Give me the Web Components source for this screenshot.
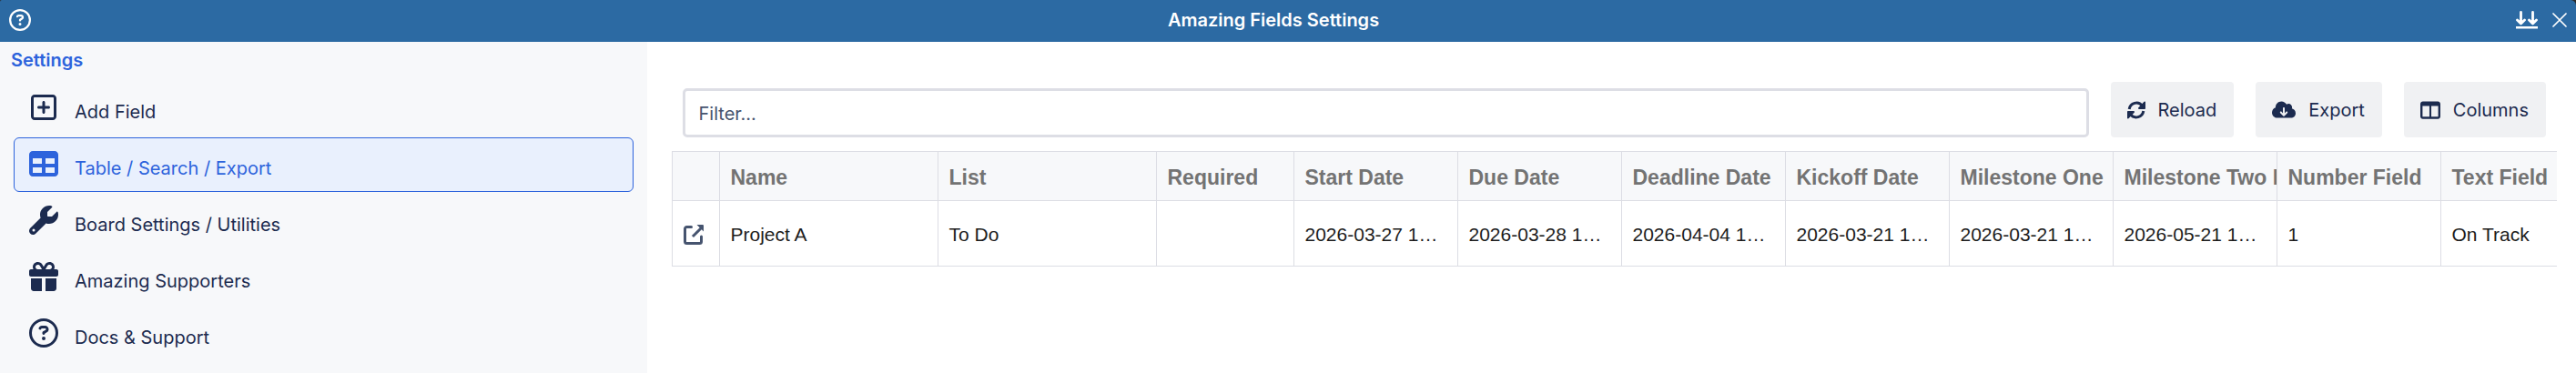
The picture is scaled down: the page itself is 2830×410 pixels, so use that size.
<!DOCTYPE html>
<html lang="en">
<head>
<meta charset="utf-8">
<title>Amazing Fields Settings</title>
<style>
html, body { margin: 0; height: 100%; }
body { background: #2b2b2b; font-family: Inter, "Liberation Sans", sans-serif; font-size: 20px; line-height: 24px; color: #1c2b4f; }
</style>
</head>
<body>
<settings-app></settings-app>
<script>
const ICONS = {
  help: ['0 0 512 512', '<path d="M464 256a208 208 0 1 0-416 0 208 208 0 1 0 416 0zM0 256a256 256 0 1 1 512 0 256 256 0 1 1-512 0zm169.800-90.700c7.900-22.300 29.100-37.300 52.800-37.300h58.300c34.900 0 63.100 28.300 63.100 63.100 0 22.600-12.100 43.500-31.700 54.800L280 264.400c-.2 13-10.900 23.600-24 23.600-13.300 0-24-10.700-24-24v-13.500c0-8.600 4.600-16.500 12.100-20.800l44.300-25.400c4.700-2.700 7.600-7.700 7.600-13.100 0-8.400-6.800-15.100-15.100-15.100h-58.300c-3.400 0-6.400 2.100-7.500 5.300l-.4 1.200c-4.400 12.500-18.200 19-30.600 14.600s-19-18.200-14.600-30.600l.3-1.300zM224 352a32 32 0 1 1 64 0 32 32 0 1 1-64 0z"/>'],
  add: ['0 0 448 448', '<path d="M64 48c-9 0-16 7-16 16v320c0 9 7 16 16 16h320c9 0 16-7 16-16V64c0-9-7-16-16-16zM0 64C0 29 29 0 64 0h320c35 0 64 29 64 64v320c0 35-29 64-64 64H64c-35 0-64-29-64-64zm200 248v-64h-64c-13 0-24-11-24-24s11-24 24-24h64v-64c0-13 11-24 24-24s24 11 24 24v64h64c13 0 24 11 24 24s-11 24-24 24h-64v64c0 13-11 24-24 24s-24-11-24-24z"/>'],
  table: ['0 0 512 448', '<path fill-rule="evenodd" d="M64 0h384c35 0 64 29 64 64v320c0 35-29 64-64 64H64c-35 0-64-29-64-64V64C0 29 29 0 64 0zM64 128v96h160v-96zm224 0v96h160v-96zM64 288v96h160v-96zm224 0v96h160v-96z"/>'],
  wrench: ['0 0 512 512', '<path d="M352 320c88.400 0 160-71.600 160-160 0-15.300-2.200-30.100-6.200-44.200-3.100-10.800-16.400-13.200-24.300-5.300l-76.800 76.800c-3 3-7.100 4.700-11.300 4.700H336c-8.800 0-16-7.200-16-16v-57.400c0-4.200 1.700-8.300 4.700-11.300l76.800-76.800c7.900-7.900 5.400-21.200-5.300-24.300C382.100 2.200 367.300 0 352 0c-88.400 0-160 71.600-160 160 0 19.100 3.400 37.500 9.500 54.500L19.900 396.100C7.200 408.800 0 426.100 0 444.100 0 481.600 30.400 512 67.900 512c18 0 35.300-7.200 48-19.900l181.600-181.600c17 6.200 35.400 9.500 54.500 9.500zM80 408a24 24 0 1 1 0 48 24 24 0 1 1 0-48z"/>'],
  gift: ['0 0 512 512', '<path d="M190.500 68.800 225.300 128H152c-22.100 0-40-17.900-40-40s17.900-40 40-40h2.200c14.900 0 28.800 7.900 36.300 20.800zM64 88c0 14.400 3.500 28 9.600 40H32c-17.700 0-32 14.300-32 32v64c0 17.700 14.300 32 32 32h448c17.700 0 32-14.300 32-32v-64c0-17.700-14.300-32-32-32h-41.600c6.100-12 9.600-25.600 9.600-40 0-48.600-39.400-88-88-88h-2.200c-31.900 0-61.500 16.900-77.700 44.400L256 85.500l-24.100-41C215.700 16.900 186.100 0 154.200 0H152C103.400 0 64 39.400 64 88zm336 0c0 22.100-17.900 40-40 40h-73.300l34.800-59.200C329.100 55.900 342.900 48 357.800 48h2.200c22.100 0 40 17.900 40 40zM32 288v176c0 26.500 21.500 48 48 48h144V288zm256 224h144c26.500 0 48-21.500 48-48V288H288z"/>'],
  reload: ['0 0 20 20', '<path fill="none" stroke="currentColor" stroke-width="3" d="M2.200 9A8 8 0 0 1 16.500 5.300M17.800 11A8 8 0 0 1 3.500 14.700"/><path d="M19 .5c.6 0 1 .4 1 1V8c0 .6-.4 1-1 1h-6c-1 0-1.300-1-.7-1.700l6-6.300zM1 19.500c-.6 0-1-.4-1-1V12c0-.6.4-1 1-1h6c1 0 1.300 1 .7 1.700l-6 6.300z"/>'],
  cloud: ['0 0 640 448', '<path d="M144 448C64.500 448 0 383.500 0 304c0-62.800 40.200-116.200 96.200-135.900-.1-2.700-.2-5.400-.2-8.100C96 71.600 167.600 0 256 0c59.300 0 111 32.200 138.700 80.200C409.900 70 428.300 64 448 64c53 0 96 43 96 96 0 12.200-2.300 23.800-6.400 34.600C596 206.400 640 258.100 640 320c0 70.700-57.300 128-128 128zM223 281c-9.400 9.400-9.400 24.600 0 33.900l80 80c9.400 9.400 24.600 9.400 33.900 0l80-80c9.400-9.400 9.400-24.600 0-33.900s-24.600-9.400-33.900 0l-39 39V184c0-13.300-10.700-24-24-24s-24 10.700-24 24v136l-39-39c-9.400-9.400-24.600-9.400-34 0z"/>'],
  columns: ['0 0 512 448', '<path fill-rule="evenodd" d="M64 0h384c35 0 64 29 64 64v320c0 35-29 64-64 64H64c-35 0-64-29-64-64V64C0 29 29 0 64 0zM56 120v272h176V120zm224 0v272h176V120z"/>'],
  open: ['0 0 22 22', '<path fill="none" stroke="currentColor" stroke-width="3" stroke-linecap="round" d="M8.500 2.500h-5a2 2 0 0 0-2 2v14a2 2 0 0 0 2 2h14a2 2 0 0 0 2-2V13"/><path d="M14.500 0H21a1 1 0 0 1 1 1v6.500l-2.200-2.200-8.800 8.800-2.100-2.100 8.800-8.800z"/>'],
  down: ['0 0 24 20', '<path fill="none" stroke="currentColor" stroke-width="2.800" stroke-linecap="round" stroke-linejoin="round" d="M5.500 1.500v12M1.500 10l4 4 4-4M18.500 1.500v12M14.500 10l4 4 4-4"/><path d="M0 17h24v2.500H0z"/>'],
  close: ['0 0 16 16', '<path fill="none" stroke="currentColor" stroke-width="1.700" stroke-linecap="round" d="m1 1 14 14M15 1 1 15"/>']
};

class AppIcon extends HTMLElement {
  connectedCallback() {
    const [box, body] = ICONS[this.getAttribute('name')];
    this.attachShadow({ mode: 'open' }).innerHTML =
      `<style>:host{display:block;flex:none}svg{display:block;width:100%;height:100%;fill:currentColor}</style>
       <svg viewBox="${box}" aria-hidden="true">${body}</svg>`;
  }
}
customElements.define('app-icon', AppIcon);

class TitleBar extends HTMLElement {
  constructor() {
    super();
    this.attachShadow({ mode: 'open' }).innerHTML = `
      <style>
        :host { box-sizing: border-box; display: flex; align-items: center; height: 46px; padding: 0 10px 2px; background: #2c6aa3; color: #fff; border-radius: 2px 6px 0 0; }
        h1 { flex: 1; margin: 0; text-align: center; font-size: 20px; line-height: 24px; font-weight: 600; }
        .end { display: flex; align-items: center; gap: 16px; }
        button { padding: 0; border: 0; background: none; color: inherit; display: block; }
        .help { width: 24px; height: 24px; }
        .down { width: 24px; height: 20px; }
        .close { width: 16px; height: 16px; }
      </style>
      <button aria-label="Help"><app-icon class="help" name="help"></app-icon></button>
      <h1><slot></slot></h1>
      <div class="end">
        <button aria-label="Collapse"><app-icon class="down" name="down"></app-icon></button>
        <button aria-label="Close"><app-icon class="close" name="close"></app-icon></button>
      </div>`;
  }
}
customElements.define('title-bar', TitleBar);

class NavItem extends HTMLElement {
  connectedCallback() {
    this.attachShadow({ mode: 'open' }).innerHTML = `
      <style>
        :host { display: block; }
        a { box-sizing: border-box; display: flex; gap: 18px; height: 60px; padding: 12px 16px; border: 1px solid transparent; border-radius: 6px; color: inherit; text-decoration: none; }
        :host([current]) a { color: #2d63dc; background: #e9f0fd; border-color: #2d63dc; }
        .pic { flex: none; display: flex; justify-content: center; align-items: center; width: 32px; height: 32px; }
        span { padding-top: 9px; }
      </style>
      <a href="#"${this.hasAttribute('current') ? ' aria-current="page"' : ''}><div class="pic"><slot name="icon"></slot></div><span><slot></slot></span></a>`;
  }
}
customElements.define('nav-item', NavItem);

class SideNav extends HTMLElement {
  constructor() {
    super();
    this.attachShadow({ mode: 'open' }).innerHTML = `
      <style>
        :host { display: block; box-sizing: border-box; background: #f7f8fa; padding: 8px 0; }
        h2 { margin: 0 12px 11px; font-size: 20px; line-height: 24px; font-weight: 600; color: #2d63dc; }
        nav { display: flex; flex-direction: column; gap: 2px; padding: 0 15px; }
        app-icon { width: 32px; height: 32px; }
        .sq { width: 28px; height: 28px; }
        .wide { height: 28px; }
      </style>
      <h2>Settings</h2>
      <nav>
        <nav-item><app-icon slot="icon" class="sq" name="add"></app-icon>Add Field</nav-item>
        <nav-item current><app-icon slot="icon" class="wide" name="table"></app-icon>Table / Search / Export</nav-item>
        <nav-item><app-icon slot="icon" name="wrench"></app-icon>Board Settings / Utilities</nav-item>
        <nav-item><app-icon slot="icon" name="gift"></app-icon>Amazing Supporters</nav-item>
        <nav-item><app-icon slot="icon" name="help"></app-icon>Docs &amp; Support</nav-item>
      </nav>`;
  }
}
customElements.define('side-nav', SideNav);

class ToolButton extends HTMLElement {
  constructor() {
    super();
    this.attachShadow({ mode: 'open' }).innerHTML = `
      <style>
        :host { display: block; flex: none; }
        button { display: flex; align-items: center; gap: 14px; height: 61px; padding: 0 19px 0 18px; border: 0; border-radius: 4px; background: #f0f1f3; color: inherit; font: inherit; }
      </style>
      <button><slot name="icon"></slot><span><slot></slot></span></button>`;
  }
}
customElements.define('tool-button', ToolButton);

class TableToolbar extends HTMLElement {
  constructor() {
    super();
    this.attachShadow({ mode: 'open' }).innerHTML = `
      <style>
        :host { display: flex; align-items: flex-end; gap: 24px; padding: 0 12px; }
        input { flex: 1; min-width: 0; box-sizing: border-box; height: 54px; padding: 2px 15px 0; border: 3px solid #dddee5; border-radius: 5px; background: #fff; color: inherit; font: inherit; }
        input::placeholder { color: #46546f; opacity: 1; }
        .reload { width: 20px; height: 20px; }
        .cloud { width: 26px; height: 19px; }
        .columns { width: 22px; height: 20px; }
      </style>
      <input type="text" placeholder="Filter..." aria-label="Filter">
      <tool-button><app-icon slot="icon" class="reload" name="reload"></app-icon>Reload</tool-button>
      <tool-button><app-icon slot="icon" class="cloud" name="cloud"></app-icon>Export</tool-button>
      <tool-button><app-icon slot="icon" class="columns" name="columns"></app-icon>Columns</tool-button>`;
  }
}
customElements.define('table-toolbar', TableToolbar);

const FIELDS = [
  ['Name', 'Project A', 240], ['List', 'To Do', 240], ['Required', '', 151],
  ['Start Date', '2026-03-27 12:00', 180], ['Due Date', '2026-03-28 12:00', 180],
  ['Deadline Date', '2026-04-04 12:00', 180], ['Kickoff Date', '2026-03-21 12:00', 180],
  ['Milestone One', '2026-03-21 12:00', 180], ['Milestone Two Date', '2026-05-21 12:00', 180],
  ['Number Field', '1', 180], ['Text Field', 'On Track', 180]
];

class RecordTable extends HTMLElement {
  constructor() {
    super();
    this.attachShadow({ mode: 'open' }).innerHTML = `
      <style>
        :host { display: block; overflow: hidden; font-family: "Liberation Sans", Arial, sans-serif; }
        table { table-layout: fixed; width: 0; border-collapse: separate; border-spacing: 0; border-top: 1px solid #dcdde4; border-left: 1px solid #dcdde4; }
        th, td { box-sizing: border-box; padding: 2px 0 0 12px; text-align: left; white-space: nowrap; overflow: hidden; border-right: 1px solid #dcdde4; border-bottom: 1px solid #dcdde4; }
        th { height: 54px; background: #f7f8fa; color: #737373; font-size: 23px; font-weight: 700; }
        td { height: 72px; padding-right: 12px; color: #1d1d1d; font-size: 21px; text-overflow: ellipsis; }
        a { display: block; color: #46546f; }
        app-icon { width: 22px; height: 22px; }
      </style>
      <table>
        <colgroup><col style="width:52px">${FIELDS.map(f => `<col style="width:${f[2]}px">`).join('')}</colgroup>
        <thead><tr><th></th>${FIELDS.map(f => `<th scope="col">${f[0]}</th>`).join('')}</tr></thead>
        <tbody><tr><td><a href="#" aria-label="Open card"><app-icon name="open"></app-icon></a></td>${FIELDS.map(f => `<td>${f[1]}</td>`).join('')}</tr></tbody>
      </table>`;
  }
}
customElements.define('record-table', RecordTable);

class SettingsApp extends HTMLElement {
  constructor() {
    super();
    this.attachShadow({ mode: 'open' }).innerHTML = `
      <style>
        :host { display: flex; flex-direction: column; min-height: 100%; }
        .body { flex: 1; display: grid; grid-template-columns: calc(25% + 3px) minmax(0, 1fr); background: #fff; }
        main { display: flex; flex-direction: column; gap: 15px; padding: 44px 21px 0 27px; }
      </style>
      <title-bar>Amazing Fields Settings</title-bar>
      <div class="body">
        <side-nav></side-nav>
        <main><table-toolbar></table-toolbar><record-table></record-table></main>
      </div>`;
  }
}
customElements.define('settings-app', SettingsApp);
</script>
</body>
</html>
